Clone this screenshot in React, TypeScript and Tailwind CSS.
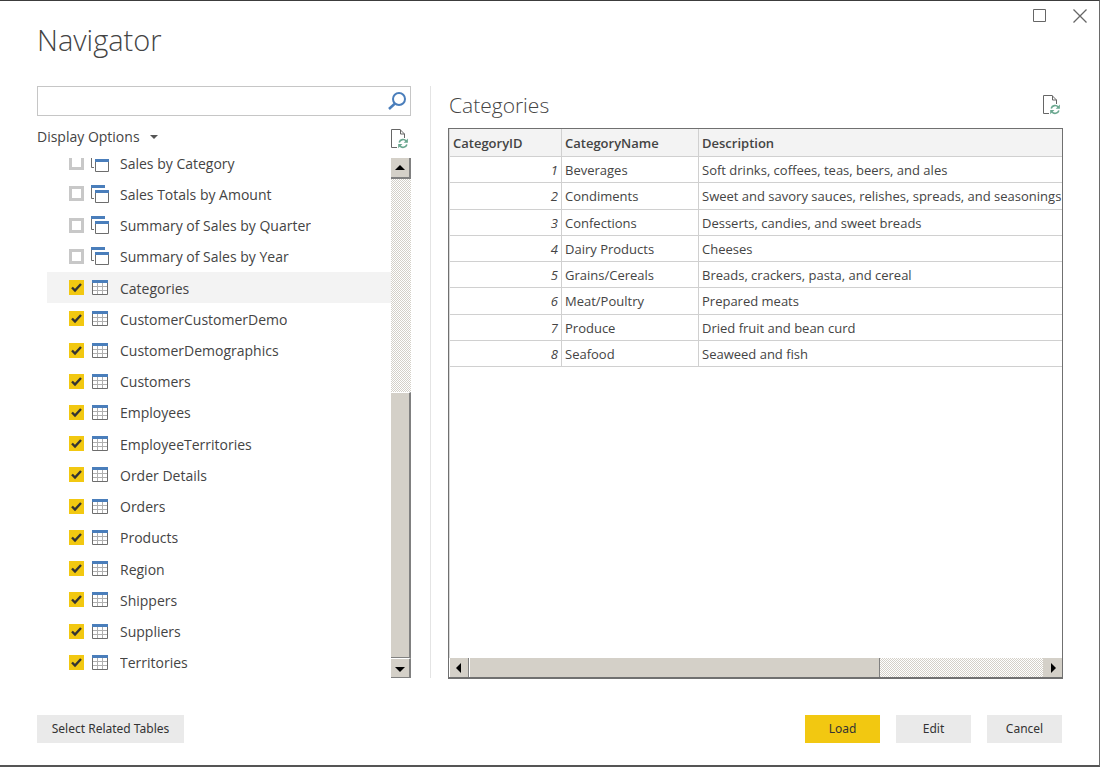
import { useState } from "react";
import type { ReactNode } from "react";

type Entity = { name: string; kind: "view" | "table" };

const entities: Entity[] = [
    { name: "Sales by Category", kind: "view" },
    { name: "Sales Totals by Amount", kind: "view" },
    { name: "Summary of Sales by Quarter", kind: "view" },
    { name: "Summary of Sales by Year", kind: "view" },
    { name: "Categories", kind: "table" },
    { name: "CustomerCustomerDemo", kind: "table" },
    { name: "CustomerDemographics", kind: "table" },
    { name: "Customers", kind: "table" },
    { name: "Employees", kind: "table" },
    { name: "EmployeeTerritories", kind: "table" },
    { name: "Order Details", kind: "table" },
    { name: "Orders", kind: "table" },
    { name: "Products", kind: "table" },
    { name: "Region", kind: "table" },
    { name: "Shippers", kind: "table" },
    { name: "Suppliers", kind: "table" },
    { name: "Territories", kind: "table" },
];

const categories = [
    { id: 1, name: "Beverages", description: "Soft drinks, coffees, teas, beers, and ales" },
    { id: 2, name: "Condiments", description: "Sweet and savory sauces, relishes, spreads, and seasonings" },
    { id: 3, name: "Confections", description: "Desserts, candies, and sweet breads" },
    { id: 4, name: "Dairy Products", description: "Cheeses" },
    { id: 5, name: "Grains/Cereals", description: "Breads, crackers, pasta, and cereal" },
    { id: 6, name: "Meat/Poultry", description: "Prepared meats" },
    { id: 7, name: "Produce", description: "Dried fruit and bean curd" },
    { id: 8, name: "Seafood", description: "Seaweed and fish" },
];

function ViewIcon() {
    return (
        <svg width="18" height="18" viewBox="0 0 18 18" className="shrink-0" aria-hidden="true">
            <path d="M0 0h14v3H0z" fill="#4a7ebb" />
            <path d="M.5 3v10.5H3" fill="none" stroke="#6d6d6d" />
            <path d="M4 5h14v3H4z" fill="#4a7ebb" />
            <path d="M4.5 8v9.5h13V8" fill="none" stroke="#6d6d6d" />
        </svg>
    );
}

function TableIcon() {
    return (
        <svg width="16" height="15" viewBox="0 0 16 15" className="shrink-0" aria-hidden="true">
            <path d="M1 3h14v11H1z" fill="#fff" />
            <path d="M5.5 3v11M10.5 3v11M1 6.5h14M1 10.5h14" fill="none" stroke="#b0b0b0" />
            <path d="M.5 3v11.5h15V3" fill="none" stroke="#6d6d6d" />
            <path d="M0 0h16v3H0z" fill="#4a7ebb" />
        </svg>
    );
}

function RefreshPageIcon() {
    return (
        <svg width="18" height="20" viewBox="0 0 18 20" fill="none" aria-hidden="true">
            <path d="M6 18.5H.5V.5H9L13.5 5v4" stroke="#666" />
            <path d="M9.5.5V5h4" stroke="#666" />
            <path d="M8.2 13.4a4 4 0 0 1 7-1.3" stroke="#6aa78f" strokeWidth="1.6" />
            <path d="M16.9 9.6v4.2h-4.2z" fill="#6aa78f" />
            <path d="M15.9 15.5a4 4 0 0 1-7 1.3" stroke="#6aa78f" strokeWidth="1.6" />
            <path d="M7.2 19.2V15h4.2z" fill="#6aa78f" />
        </svg>
    );
}

function Arrow({ path }: { path: string }) {
    return (
        <svg width="10" height="10" viewBox="0 0 10 10" aria-hidden="true">
            <path d={path} fill="#000" />
        </svg>
    );
}

function FooterButton({ children, primary = false }: { children: ReactNode; primary?: boolean }) {
    return (
        <button
            type="button"
            className={`h-7 w-[75px] font-['Noto_Sans',sans-serif] text-xs text-[#333] ${primary ? "bg-[#f2c811]" : "bg-[#eaeaea]"}`}
        >
            {children}
        </button>
    );
}

export default function App() {
    const [selected, setSelected] = useState<string[]>(
        entities.filter((entity) => entity.kind === "table").map((entity) => entity.name)
    );

    const toggle = (name: string) =>
        setSelected((prev) => (prev.includes(name) ? prev.filter((item) => item !== name) : [...prev, name]));

    return (
        <div className="flex min-h-screen flex-col border-t border-r border-b-2 border-t-[#3c3c3c] border-r-[#6a6a6a] border-b-[#555] bg-white font-['Open_Sans','Noto_Sans',sans-serif] text-[#444]">
            {/* Title bar */}
            <header className="flex h-[85px] items-start justify-between pr-3 pl-[37px]">
                <h1 className="pt-[19px] text-[29px] leading-10 font-light">Navigator</h1>
                <div className="flex gap-[26px] pt-2">
                    <button type="button" aria-label="Maximize">
                        <svg width="14" height="14" viewBox="0 0 14 14" fill="none" stroke="#666">
                            <path d="M.5.5h12v12H.5z" />
                        </svg>
                    </button>
                    <button type="button" aria-label="Close">
                        <svg width="14" height="14" viewBox="0 0 14 14" fill="none" stroke="#666" strokeWidth="1.3">
                            <path d="m.5.5 13 13m0-13-13 13" />
                        </svg>
                    </button>
                </div>
            </header>

            <main className="flex flex-1 pr-9 pl-[37px]">
                {/* Entity list */}
                <section className="flex w-[374px] shrink-0 flex-col">
                    <div className="flex h-[30px] items-center border border-[#c6c6c6] pr-[3px]">
                        <input type="text" aria-label="Search" className="h-full min-w-0 flex-1 px-2 text-sm outline-none" />
                        <button type="button" aria-label="Search tables">
                            <svg width="19" height="19" viewBox="0 0 19 19" fill="none" stroke="#4a7ebb">
                                <circle cx="11" cy="7" r="6" strokeWidth="2" />
                                <path d="m7 11.5-6 5.500" strokeWidth="2.5" />
                            </svg>
                        </button>
                    </div>

                    <div className="flex h-[42px] items-center justify-between pr-0.5">
                        <button type="button" className="flex items-center gap-2.5 text-sm">
                            Display Options
                            <svg width="8" height="4" viewBox="0 0 8 4" aria-hidden="true">
                                <path d="M0 0h8L4 4z" fill="#555" />
                            </svg>
                        </button>
                        <button type="button" aria-label="Refresh list" className="pt-1">
                            <RefreshPageIcon />
                        </button>
                    </div>

                    <div className="flex flex-1">
                        <div className="flex h-[520px] min-w-0 flex-1 flex-col justify-end overflow-hidden pl-2.5">
                            <ul className="flex h-[531px] shrink-0 flex-col">
                                {entities.map((entity) => (
                                    <li key={entity.name} className={`flex-1 ${entity.name === "Categories" ? "bg-[#f3f3f3]" : ""}`}>
                                        <label className="flex h-full items-center pl-[22px] text-sm">
                                            <span className="grid shrink-0">
                                                <input
                                                    type="checkbox"
                                                    checked={selected.includes(entity.name)}
                                                    onChange={() => toggle(entity.name)}
                                                    className="peer col-start-1 row-start-1 size-[15px] appearance-none border-3 border-[#c8c8c8] bg-white checked:border-0 checked:bg-[#f2c811]"
                                                />
                                                <svg
                                                    viewBox="0 0 15 15"
                                                    fill="none"
                                                    stroke="#333"
                                                    strokeWidth="2.4"
                                                    className="pointer-events-none invisible col-start-1 row-start-1 size-[15px] peer-checked:visible"
                                                >
                                                    <path d="m3 7.5 3 3L12 4" />
                                                </svg>
                                            </span>
                                            <span className="mr-2.5 ml-[7px] flex w-[19px] shrink-0">
                                                {entity.kind === "view" ? (
                                                    <ViewIcon />
                                                ) : (
                                                    <span className="pl-px">
                                                        <TableIcon />
                                                    </span>
                                                )}
                                            </span>
                                            <span className="truncate pt-0.5">{entity.name}</span>
                                        </label>
                                    </li>
                                ))}
                            </ul>
                        </div>
                        <div className="flex w-5 shrink-0 flex-col bg-[repeating-conic-gradient(#d4d0c8_0_25%,#fff_0_50%)] bg-[length:2px_2px]">
                            <button
                                type="button"
                                aria-label="Scroll up"
                                className="flex h-[21px] items-center justify-center border-r-2 border-b-2 border-[#808080] bg-[#d4d0c8]"
                            >
                                <Arrow path="M0 7h10L5 2z" />
                            </button>
                            <div className="mt-auto h-[266px] border-t border-r-2 border-b border-t-white border-r-[#808080] border-b-[#808080] bg-[#d4d0c8]" />
                            <button
                                type="button"
                                aria-label="Scroll down"
                                className="flex h-5 items-center justify-center border-t border-r-2 border-b border-t-white border-r-[#808080] border-b-[#808080] bg-[#d4d0c8]"
                            >
                                <Arrow path="M0 4h10L5 9z" />
                            </button>
                        </div>
                    </div>
                </section>

                <div className="mr-[17px] ml-[19px] w-px shrink-0 bg-[#e4e4e4]" />

                {/* Preview */}
                <section className="-mb-px flex min-w-0 flex-1 flex-col">
                    <div className="flex h-[42px] items-center justify-between pr-0.5 pb-1 pl-px">
                        <h2 className="text-[21px] leading-7 font-light">Categories</h2>
                        <button type="button" aria-label="Refresh preview">
                            <RefreshPageIcon />
                        </button>
                    </div>
                    <div className="flex flex-1 flex-col border border-b-2 border-[#707070]">
                        <div className="flex-1 overflow-hidden border-l border-[#d8d8d8]">
                            <table className="h-[238px] w-full table-fixed border-separate border-spacing-0 text-left text-[13px] leading-5 whitespace-nowrap">
                                <thead>
                                    <tr className="h-7 bg-[#f3f3f3]">
                                        <th className="w-28 border-r border-b border-[#d0d0d0] pl-[3px] font-semibold">CategoryID</th>
                                        <th className="w-[137px] border-r border-b border-[#d0d0d0] pl-[3px] font-semibold">CategoryName</th>
                                        <th className="border-b border-[#d0d0d0] pl-[3px] font-semibold">Description</th>
                                    </tr>
                                </thead>
                                <tbody>
                                    {categories.map((row) => (
                                        <tr key={row.id} className="h-[26px]">
                                            <td className="border-r border-b border-[#d0d0d0] pt-px pr-[3px] text-right italic">{row.id}</td>
                                            <td className="border-r border-b border-[#d0d0d0] pt-px pl-[3px]">{row.name}</td>
                                            <td className="overflow-hidden border-b border-[#d0d0d0] pt-px pl-[3px]">{row.description}</td>
                                        </tr>
                                    ))}
                                </tbody>
                            </table>
                        </div>
                        <div className="flex h-[19px] bg-[repeating-conic-gradient(#d4d0c8_0_25%,#fff_0_50%)] bg-[length:2px_2px]">
                            <button
                                type="button"
                                aria-label="Scroll left"
                                className="flex w-5 items-center justify-center border-r border-l border-r-[#808080] border-l-white bg-[#d4d0c8]"
                            >
                                <Arrow path="M7 0v10L2 5z" />
                            </button>
                            <div className="w-[67%] border-r border-l border-r-[#808080] border-l-white bg-[#d4d0c8]" />
                            <button
                                type="button"
                                aria-label="Scroll right"
                                className="ml-auto flex w-[19px] items-center justify-center bg-[#d4d0c8]"
                            >
                                <Arrow path="M3 0v10l5-5z" />
                            </button>
                        </div>
                    </div>
                </section>
            </main>

            <footer className="flex justify-between pt-[37px] pr-[37px] pb-[22px] pl-[37px]">
                <button type="button" className="h-7 w-[147px] bg-[#eaeaea] font-['Noto_Sans',sans-serif] text-xs text-[#333]">
                    Select Related Tables
                </button>
                <div className="flex gap-4">
                    <FooterButton primary>Load</FooterButton>
                    <FooterButton>Edit</FooterButton>
                    <FooterButton>Cancel</FooterButton>
                </div>
            </footer>
        </div>
    );
}
